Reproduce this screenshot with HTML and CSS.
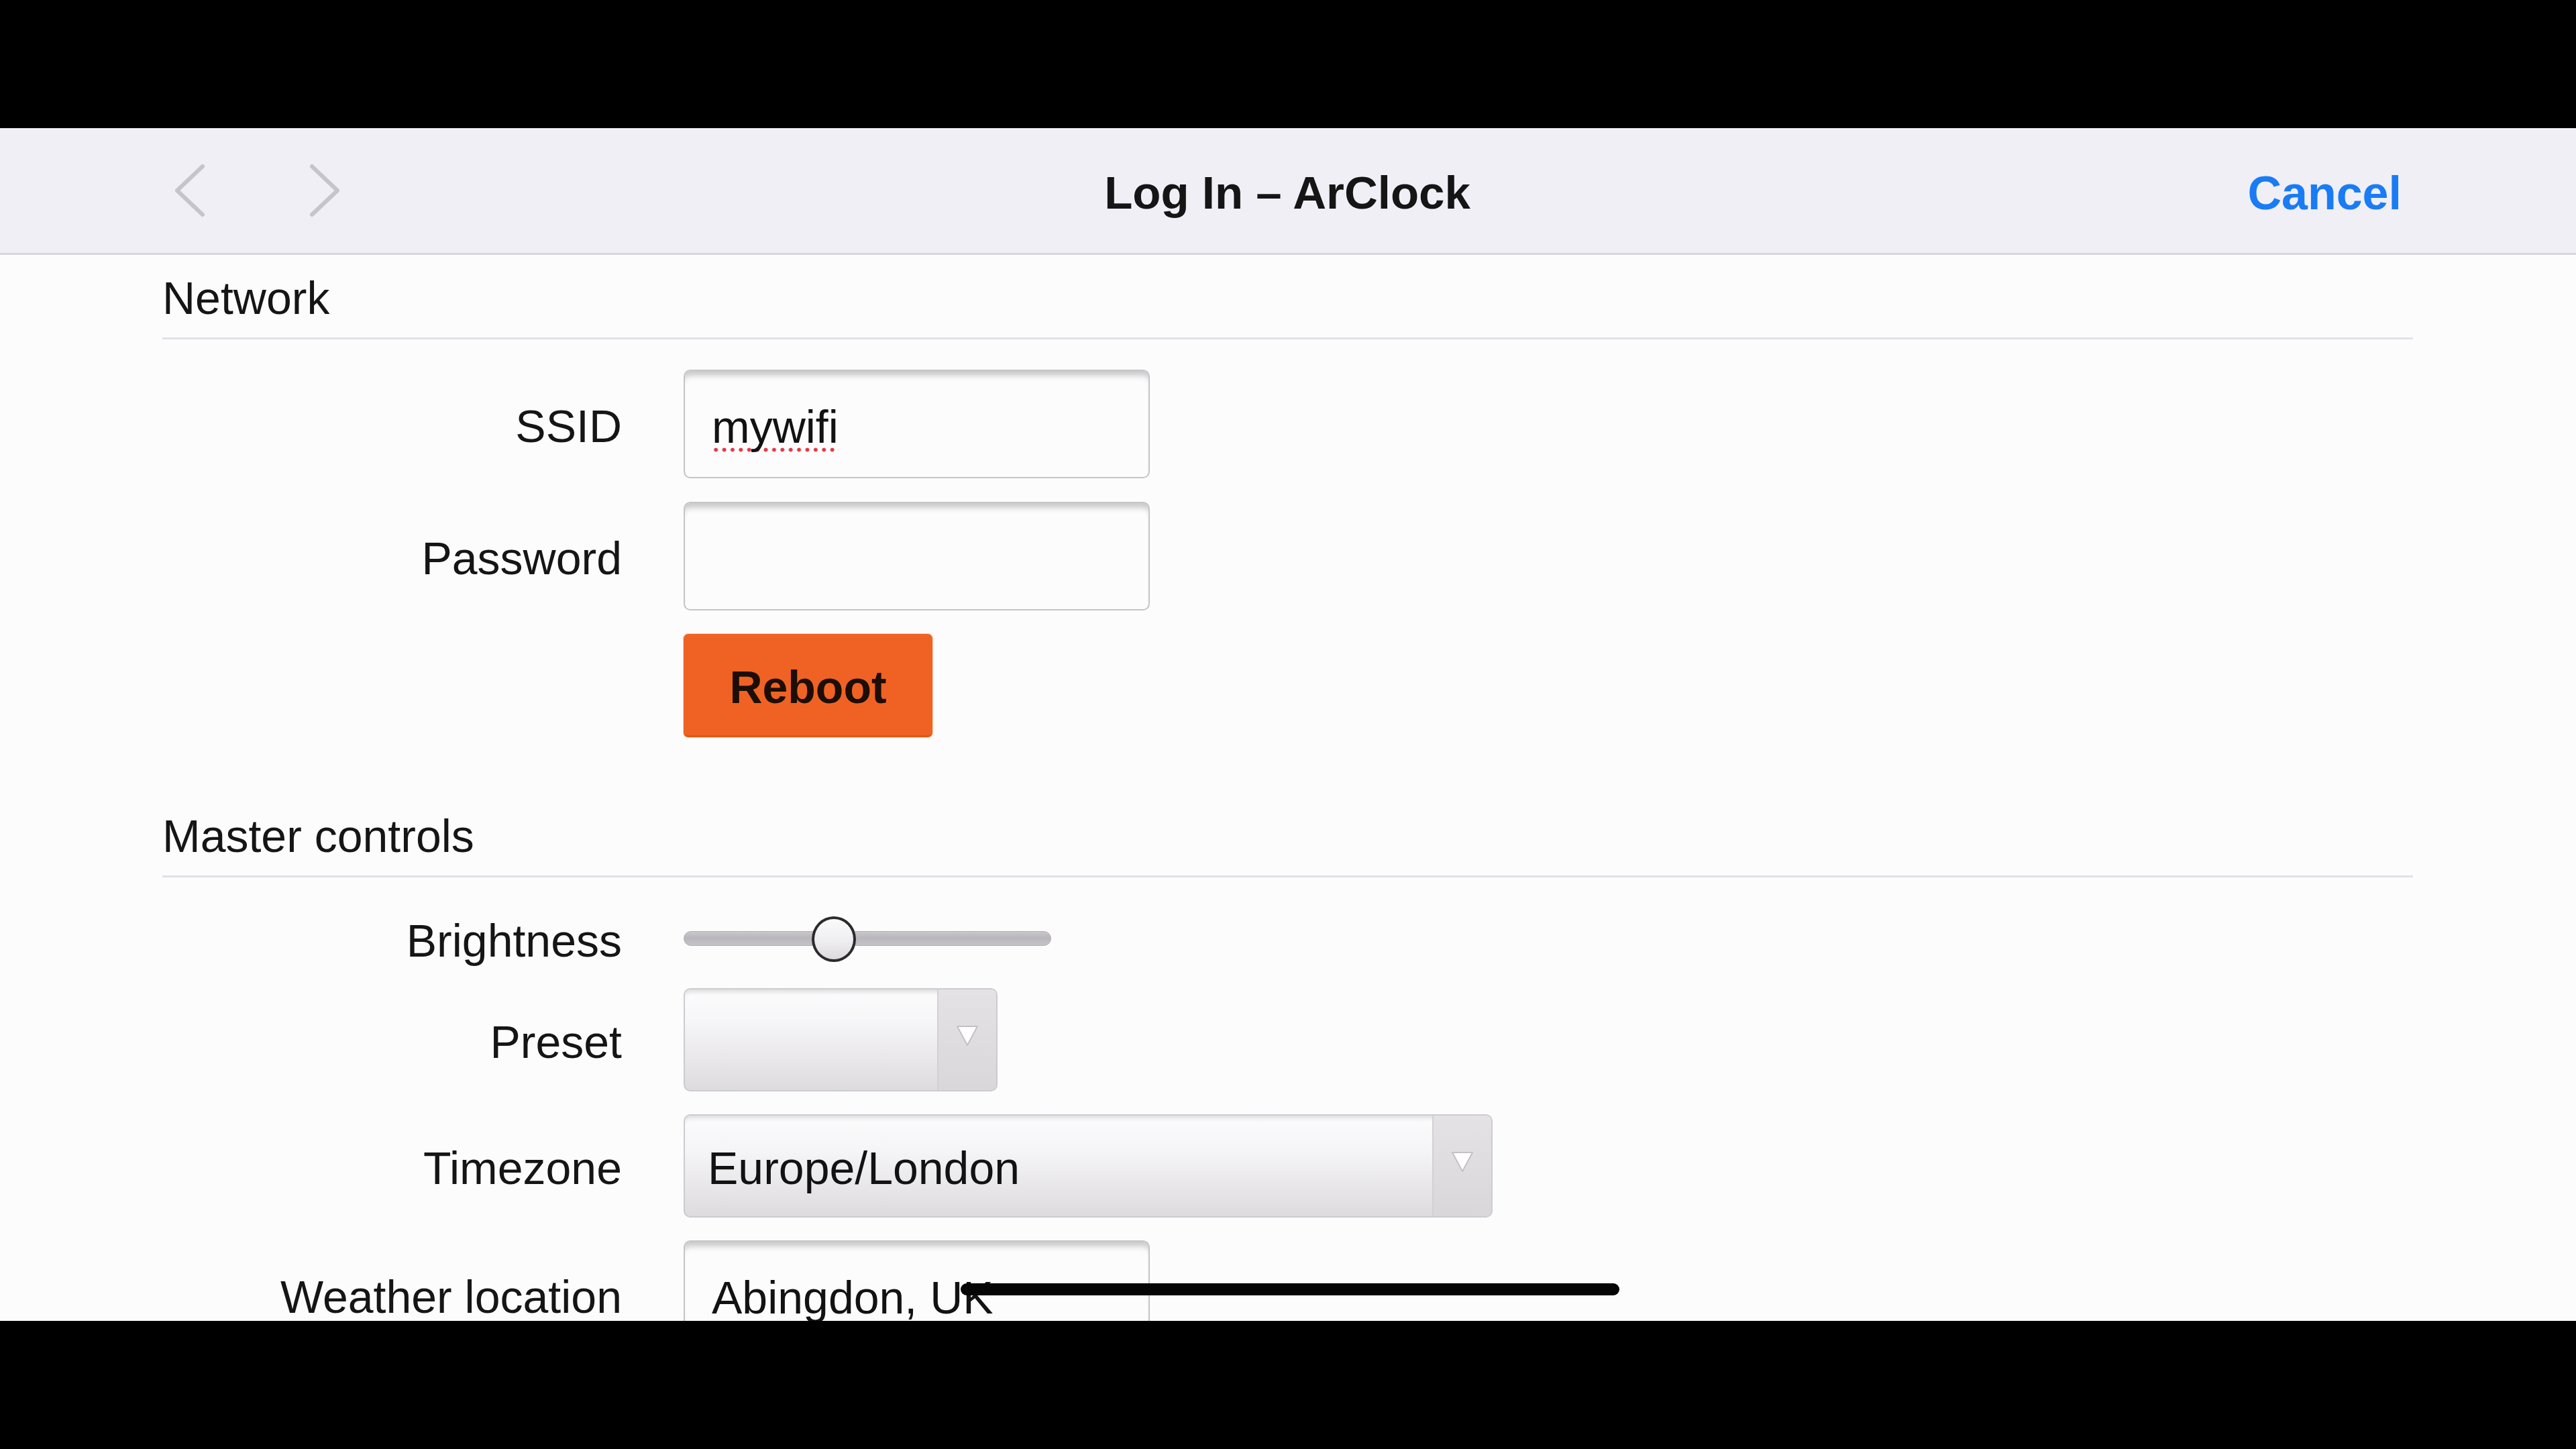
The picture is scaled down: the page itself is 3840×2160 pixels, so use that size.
FILE: index.html
```html
<!DOCTYPE html>
<html lang="en">
<head>
<meta charset="utf-8">
<title>Log In – ArClock</title>
<link rel="stylesheet" href="styles.css">
</head>
<body>
<div class="screen">
  <header class="nav">
    <div class="nav-left">
      <svg class="chev" viewBox="0 0 50 80" width="50" height="80"><path d="M44 4 L6 40 L44 76" /></svg>
      <svg class="chev" viewBox="0 0 50 80" width="50" height="80"><path d="M6 4 L44 40 L6 76" /></svg>
    </div>
    <div class="nav-title">Log In – ArClock</div>
    <div class="nav-right"><span class="cancel">Cancel</span></div>
  </header>

  <main class="content">
    <section class="section">
      <h2 class="section-title">Network</h2>
      <div class="form form-network">
        <div class="label">SSID</div>
        <div class="input input-md"><span class="spell">mywifi</span></div>
        <div class="label">Password</div>
        <div class="input input-md"></div>
        <div class="label"></div>
        <div class="btn-cell"><button class="btn">Reboot</button></div>
      </div>
    </section>

    <section class="section section-master">
      <h2 class="section-title">Master controls</h2>
      <div class="form form-master">
        <div class="label">Brightness</div>
        <div class="slider">
          <div class="track"></div>
          <div class="thumb" style="--value:0.396"></div>
        </div>
        <div class="label">Preset</div>
        <div class="select select-sm"><span class="select-value"></span><span class="select-arrow"><svg viewBox="0 0 34 32" width="34" height="32"><polygon points="2,2 32,2 17,30" /></svg></span></div>
        <div class="label">Timezone</div>
        <div class="select select-lg"><span class="select-value">Europe/London</span><span class="select-arrow"><svg viewBox="0 0 34 32" width="34" height="32"><polygon points="2,2 32,2 17,30" /></svg></span></div>
        <div class="label">Weather location</div>
        <div class="input input-md"><span>Abingdon, UK</span></div>
      </div>
    </section>
  </main>

  <div class="scroll-indicator"></div>
</div>
</body>
</html>
```

FILE: styles.css
```css
* { box-sizing: border-box; }

html, body {
  margin: 0;
  padding: 0;
  background: #000;
}

body {
  width: 3840px;
  height: 2160px;
  overflow: hidden;
  font-family: "Liberation Sans", Arial, sans-serif;
  color: #141414;
}

.screen {
  position: relative;
  margin-top: 191px;
  height: 1778px;
  overflow: hidden;
  background: #fdfcfd;
}

/* ---------- nav bar ---------- */
.nav {
  height: 189px;
  padding: 8px 260px 0 258px;
  background: #f0eff6;
  border-bottom: 3px solid #d8d6dc;
  display: grid;
  grid-template-columns: 1fr auto 1fr;
  align-items: center;
}

.nav-left {
  display: flex;
  align-items: center;
  gap: 151px;
  margin-top: -8px;
}

.chev path {
  fill: none;
  stroke: #c5c4ca;
  stroke-width: 6;
  stroke-linecap: round;
  stroke-linejoin: round;
}

.nav-title {
  font-size: 69px;
  line-height: 70px;
  font-weight: 700;
  color: #151515;
  white-space: nowrap;
}

.nav-right {
  display: flex;
  justify-content: flex-end;
}

.cancel {
  font-size: 70px;
  line-height: 70px;
  font-weight: 700;
  color: #1a7cf4;
}

/* ---------- content ---------- */
.content {
  padding: 0 243px 0 242px;
}

.section-title {
  margin: 0;
  padding: 24px 0 19px 0;
  font-size: 68px;
  line-height: 80px;
  font-weight: 400;
  color: #151515;
  border-bottom: 3px solid #e3e1e6;
}

.section-master {
  margin-top: 83px;
}

.form {
  display: grid;
  grid-template-columns: 685px 1fr;
  column-gap: 92px;
  align-items: center;
}

.form-network {
  padding-top: 45px;
  row-gap: 35px;
}

.form-master {
  padding-top: 51px;
  row-gap: 34px;
}

.label {
  text-align: right;
  font-size: 68px;
  line-height: 80px;
  padding-top: 3px;
  margin-bottom: -3px;
  color: #151515;
  white-space: nowrap;
}

/* ---------- text inputs ---------- */
.input {
  height: 162px;
  border: 2px solid #c6c4c9;
  border-radius: 10px;
  background: #fdfcfd;
  box-shadow: inset 0 12px 8px -5px rgba(0, 0, 0, 0.2);
  display: flex;
  align-items: center;
  padding: 8px 0 0 40px;
  font-size: 68px;
  line-height: 80px;
  color: #121212;
}

.input-md { width: 695px; }

.spell {
  background-image: radial-gradient(circle, #e03a44 0 2.6px, transparent 3.3px);
  background-size: 12.4px 9px;
  background-repeat: repeat-x;
  background-position: 0 calc(100% - 1px);
}

/* ---------- button ---------- */
.btn-cell { display: flex; }

.btn {
  width: 371px;
  height: 154px;
  border: none;
  border-bottom: 3px solid #dd5a12;
  border-radius: 7px;
  background: #f06224;
  box-shadow: 0 0 0 1px rgba(240, 140, 60, 0.35);
  font-family: "Liberation Sans", Arial, sans-serif;
  font-size: 68px;
  font-weight: 700;
  color: #1c0e06;
  padding: 6px 0 0 0;
}

/* ---------- slider ---------- */
.slider {
  position: relative;
  width: 548px;
  height: 80px;
  display: flex;
  align-items: center;
}

.track {
  width: 100%;
  height: 22px;
  border-radius: 11px;
  background: linear-gradient(to bottom, #c9c7cb 0%, #b9b7bb 45%, #c4c2c6 100%);
  border: 1px solid #b0aeb2;
}

.thumb {
  position: absolute;
  top: 7px;
  left: calc(var(--value) * (100% - 66px));
  width: 66px;
  height: 68px;
  border-radius: 50%;
  border: 4px solid #2b2b2d;
  background: linear-gradient(to bottom, #fbfafb 0%, #eeedef 55%, #dcdadd 100%);
}

/* ---------- selects ---------- */
.select {
  height: 154px;
  border: 2px solid #cdcbd0;
  border-radius: 10px;
  background: linear-gradient(to bottom, #fdfcfd 0%, #f5f4f6 35%, #dddbde 100%);
  box-shadow: inset 0 8px 6px -4px rgba(0, 0, 0, 0.12);
  display: flex;
  align-items: stretch;
  overflow: hidden;
}

.select-sm { width: 468px; }
.select-lg { width: 1206px; }

.select-value {
  flex: 1;
  display: flex;
  align-items: center;
  padding: 6px 0 0 34px;
  font-size: 68px;
  line-height: 80px;
  color: #121212;
  white-space: nowrap;
}

.select-arrow {
  width: 88px;
  border-left: 2px solid #d2d0d4;
  background: linear-gradient(to bottom, #e4e2e5 0%, #d9d7da 100%);
  display: flex;
  justify-content: center;
  padding-top: 53px;
}

.select-arrow polygon {
  fill: #ffffff;
  stroke: #c3c1c5;
  stroke-width: 2;
  stroke-linejoin: round;
}

/* ---------- overlay bar ---------- */
.scroll-indicator {
  position: absolute;
  left: 1432px;
  top: 1722px;
  width: 982px;
  height: 18px;
  border-radius: 9px;
  background: #050505;
}
```
